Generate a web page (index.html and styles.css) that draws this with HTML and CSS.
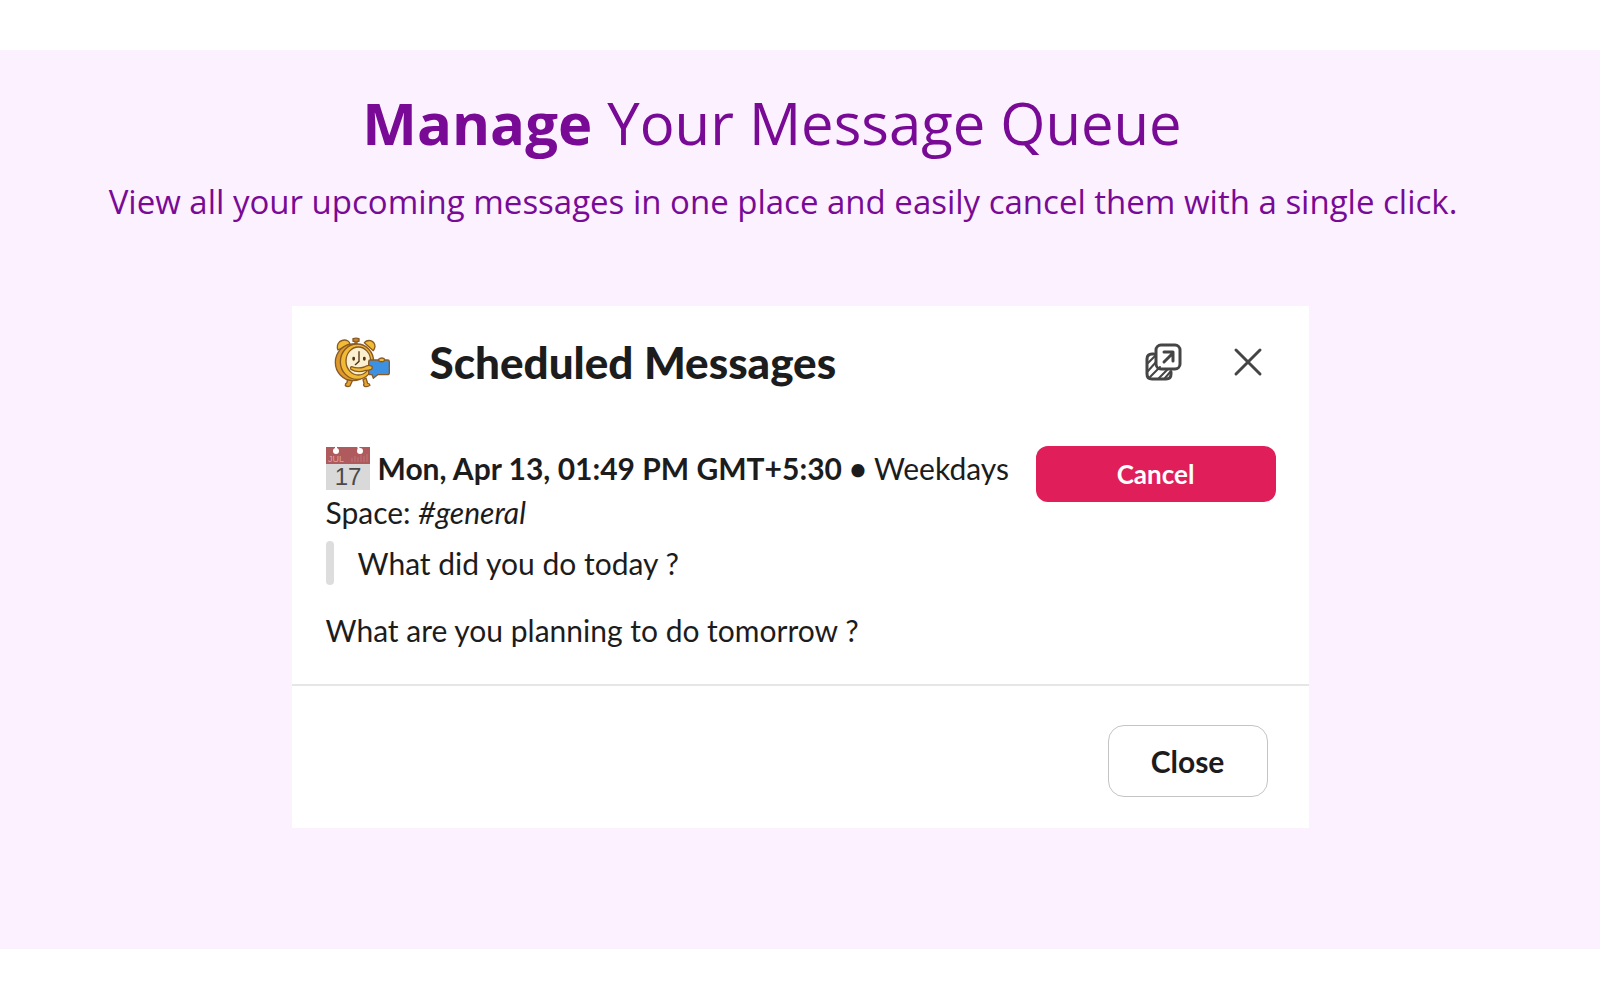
FILE: index.html
```
<!DOCTYPE html>
<html lang="en">
<head>
<meta charset="utf-8">
<title>Manage Your Message Queue</title>
<link rel="stylesheet" href="styles.css">
</head>
<body>
<main class="band">
  <header class="intro">
    <h1 class="headline"><strong>Manage</strong> Your Message Queue</h1>
    <p class="tagline">View all your upcoming messages in one place and easily cancel them with a single click.</p>
  </header>

  <section class="dialog" role="dialog" aria-labelledby="dialog-title">
    <header class="dialog-head">
      <svg class="mascot" viewBox="0 2 240 210" aria-hidden="true">
        <g stroke="#8a5a24" stroke-width="4" stroke-linejoin="round" stroke-linecap="round">
          <path d="M68 156l-2 13q-6 3-5 9 7 5 14 1l8-18zM114 160l3 11q-3 6 2 9 8 3 16-3-1-6-7-6l-5-16z" fill="#e5a52c"/>
          <path d="M84 37q9-3 18 0v8h-6v12h-6V45h-6z" fill="#c98428"/>
          <path d="M39 71q-6-15 5-25 13-9 25-2 6 4 5 9zM118 49q7-8 19-6 13 5 13 18-1 6-5 12z" fill="#f0bb35"/>
          <ellipse cx="84" cy="108" rx="53" ry="55" fill="#df982a"/>
          <ellipse cx="96" cy="106" rx="50" ry="53" fill="#f2b933"/>
          <ellipse cx="100" cy="104" rx="37" ry="42" fill="#faf0cf"/>
          <path d="M136 101h52q5 0 5 5v33q0 6-6 6h-29l-13 11-4-11h-5q-5 0-5-6v-33q0-5 5-5z" fill="#3c91e2"/>
          <path d="M161 99q6-6 15-3 5 5 0 9-8 3-14-1z" fill="#f2b933"/>
          <path d="M80 121q18 7 38 1 12-8 21-3 6 5 0 10-9 4-17 3-24 9-44-3-4-6 2-8z" fill="#f2b933"/>
        </g>
        <g stroke="#523414" stroke-width="4" stroke-linecap="round" fill="none">
          <path d="M102 76v29l-11 10"/>
          <path d="M86 95v4M118 95v4" stroke-width="8"/>
        </g>
      </svg>
      <h2 class="dialog-title" id="dialog-title">Scheduled Messages</h2>
      <button class="icon-button" type="button" aria-label="Open in new window">
        <svg viewBox="0 0 38 38" width="38" height="38" fill="none" stroke="#454545" stroke-width="3" stroke-linecap="round" stroke-linejoin="round" aria-hidden="true">
          <rect x="11" y="2" width="24" height="24" rx="5"/>
          <path d="M9 11H7q-5 0-5 5v15q0 5 5 5h14q5 0 5-5v-2"/>
          <path d="M3 20l8-8M3 28l8-9M5 34l10-10M14 35l8-8M20 35l6-7" stroke-width="2"/>
          <path d="M19 19l9-9M19 9h9v9"/>
        </svg>
      </button>
      <button class="icon-button" type="button" aria-label="Close dialog">
        <svg viewBox="0 0 38 38" width="38" height="38" fill="none" stroke="#454545" stroke-width="3" stroke-linecap="round" aria-hidden="true">
          <path d="M7 7l24 24M31 7L7 31"/>
        </svg>
      </button>
    </header>

    <div class="dialog-body">
      <div class="message">
        <p class="line when">
          <svg class="calendar" viewBox="0 0 44 43" role="img" aria-label="Calendar">
            <path d="M0 17h44v26H0z" fill="#d9d9d9"/>
            <path d="M0 0h44v17H0z" fill="#af5a5c"/>
            <path d="M26 15V11M29 15V9M32 15V10M35 15V8M38 15V9M41 15V7" stroke="#bd7477" stroke-width="1"/>
            <path d="M10 0v4M32 0l2 4" stroke="#fff" stroke-width="2"/>
            <circle cx="10" cy="4" r="3" fill="#fff"/>
            <circle cx="34" cy="4" r="3" fill="#fff"/>
            <text x="2" y="15" class="cal-month">JUL</text>
            <text x="22" y="38" class="cal-day">17</text>
          </svg>
          <span><strong>Mon, Apr 13, 01:49 PM GMT+5:30 •</strong> Weekdays</span>
        </p>
        <p class="line">Space: <em>#general</em></p>
        <blockquote class="quote">What did you do today ?</blockquote>
        <p class="line">What are you planning to do tomorrow ?</p>
      </div>
      <button class="cancel" type="button">Cancel</button>
    </div>

    <footer class="dialog-foot">
      <button class="close" type="button">Close</button>
    </footer>
  </section>
</main>
</body>
</html>
```

FILE: styles.css
```
* {
  box-sizing: border-box;
}

body {
  margin: 0;
  background: #fff;
  color: #1d1c1d;
  font-family: Lato, "Liberation Sans", sans-serif;
}

h1, h2, p, blockquote {
  margin: 0;
}

button {
  font: inherit;
  cursor: pointer;
}

.band {
  display: flex;
  flex-direction: column;
  align-items: center;
  margin: 50px 0;
  padding: 32px 16px 121px;
  background: #fcf1ff;
}

.intro {
  padding-right: 34px;
  color: #780a96;
  font-family: "Open Sans", "Noto Sans", sans-serif;
  text-align: center;
}

.headline {
  padding-right: 22px;
  font-size: 58px;
  font-weight: 400;
  line-height: 82px;
}

.headline strong {
  font-weight: 700;
}

.tagline {
  margin-top: 14px;
  font-size: 33px;
  line-height: 48px;
}

.dialog {
  width: 100%;
  max-width: 1017px;
  margin-top: 80px;
  background: #fff;
}

.dialog-head {
  display: flex;
  align-items: center;
  padding: 21px 42px 27px 33px;
}

.mascot {
  width: 80px;
  height: 70px;
  flex: none;
}

.dialog-title {
  flex: 1;
  margin-left: 25px;
  font-size: 44px;
  font-weight: 900;
  line-height: 64px;
}

.icon-button {
  display: flex;
  padding: 0;
  border: 0;
  background: none;
}

.icon-button + .icon-button {
  margin-left: 46px;
}

.dialog-body {
  display: flex;
  align-items: flex-start;
  justify-content: space-between;
  gap: 24px;
  padding: 22px 33px 32px 34px;
  border-bottom: 2px solid #e6e6e6;
}

.line,
.quote {
  font-size: 30px;
  line-height: 44px;
}

.when {
  display: flex;
  align-items: center;
  gap: 8px;
}

.calendar {
  width: 44px;
  height: 43px;
  flex: none;
  overflow: visible;
}

.cal-month,
.cal-day {
  font-family: "Liberation Sans", sans-serif;
}

.cal-month {
  fill: #d9a5a6;
  font-size: 9px;
}

.cal-day {
  fill: #4a4a4a;
  font-size: 24px;
  text-anchor: middle;
}

.quote {
  display: flex;
  margin: 7px 0 23px;
}

.quote::before {
  content: "";
  width: 8px;
  margin-right: 24px;
  border-radius: 4px;
  background: #ddd;
}

.cancel {
  width: 240px;
  height: 56px;
  flex: none;
  padding-bottom: 2px;
  border: 0;
  border-radius: 12px;
  background: #e01e5a;
  color: #fff;
  font-size: 26px;
  font-weight: 700;
}

.dialog-foot {
  display: flex;
  justify-content: flex-end;
  padding: 39px 41px 31px;
}

.close {
  width: 160px;
  height: 72px;
  padding-bottom: 2px;
  border: 1px solid #c4c4c4;
  border-radius: 16px;
  background: #fff;
  color: #1d1c1d;
  font-size: 30px;
  font-weight: 700;
}
```
